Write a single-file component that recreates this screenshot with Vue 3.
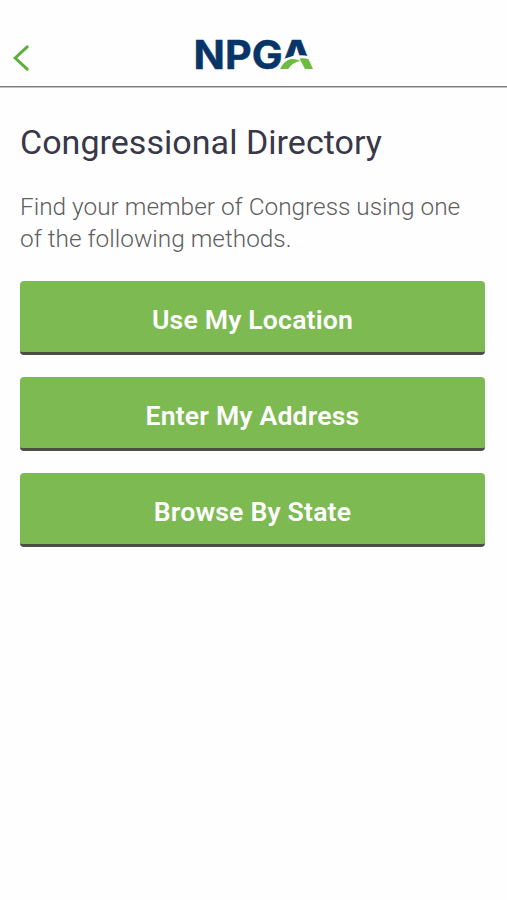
<template>
  <div class="page">
    <header class="header">
      <button class="back-btn" aria-label="Back">
        <svg width="18" height="28" viewBox="0 0 18 28">
          <path d="M15.2 2.8 L3.2 14 L15.2 25.2" />
        </svg>
      </button>
      <svg class="logo" width="132" height="50" viewBox="-2 -8 132 50">
        <defs>
          <clipPath id="mark-top">
            <path d="M80 0 H125 V22 Q108 15 92 21.5 L80 27 Z" />
          </clipPath>
        </defs>
        <text x="0.6" y="31.7" textLength="89" lengthAdjust="spacingAndGlyphs">NPG</text>
        <text x="87" y="31.7" textLength="33" lengthAdjust="spacingAndGlyphs" clip-path="url(#mark-top)">A</text>
        <!-- green sweep under the A -->
        <path class="sweep" d="M87 31.9 Q91 24 97 22.2 Q102 21.2 107.5 24 Q99 25.5 95.3 31.9 Z" />
        <path class="sweep" d="M106.5 21.4 Q111 20.6 115.6 22.2 L120 31.9 H112 Z" />
      </svg>
    </header>

    <main class="content">
      <h1 class="title">Congressional Directory</h1>
      <p class="intro">Find your member of Congress using one<br />of the following methods.</p>
      <div class="actions">
        <button v-for="method in methods" :key="method" class="action-btn">{{ method }}</button>
      </div>
    </main>
  </div>
</template>

<script setup>
const methods = ['Use My Location', 'Enter My Address', 'Browse By State'];
</script>

<style>
body {
  background: #fefefe;
}
</style>

<style scoped>
.page {
  min-height: 900px;
  background: #fefefe;
  font-family: Roboto, "Liberation Sans", sans-serif;
}

.header {
  height: 87px;
  box-sizing: border-box;
  padding: 29px 0 0 12px;
  border-bottom: 1px solid #7b797b;
  box-shadow: 0 1px 0 #c4c3c4;
  display: flex;
  align-items: flex-start;
}

.back-btn {
  width: 18px;
  height: 28px;
  margin-top: 15px;
  padding: 0;
  border: none;
  background: none;
}

.back-btn svg {
  display: block;
  fill: none;
  stroke: #5eae3c;
  stroke-width: 3;
  stroke-linecap: round;
}

.logo {
  margin-left: 161px;
  font-family: Inter, sans-serif;
  font-size: 40px;
  font-weight: 700;
  fill: #073568;
  stroke: #073568;
  stroke-width: 0.5;
}

.sweep {
  fill: #6dbb40;
  stroke: none;
}

.content {
  padding: 34px 22px 0 20px;
}

.title {
  margin: 0;
  font-size: 34px;
  line-height: 42px;
  font-weight: 400;
  letter-spacing: 0.04px;
  color: #383848;
}

.intro {
  margin: 28px 0 0;
  font-size: 24.4px;
  line-height: 31.5px;
  font-weight: 300;
  color: #5e5e5e;
  white-space: nowrap;
}

.actions {
  margin-top: 27px;
  display: flex;
  flex-direction: column;
  gap: 22px;
}

.action-btn {
  height: 74px;
  padding: 6px 0 0;
  border: none;
  border-bottom: 3px solid #4c4f46;
  border-radius: 4px;
  background: #7dba52;
  color: #fff;
  font-family: inherit;
  font-size: 26.6px;
  font-weight: 600;
  letter-spacing: 0.18px;
}
</style>
